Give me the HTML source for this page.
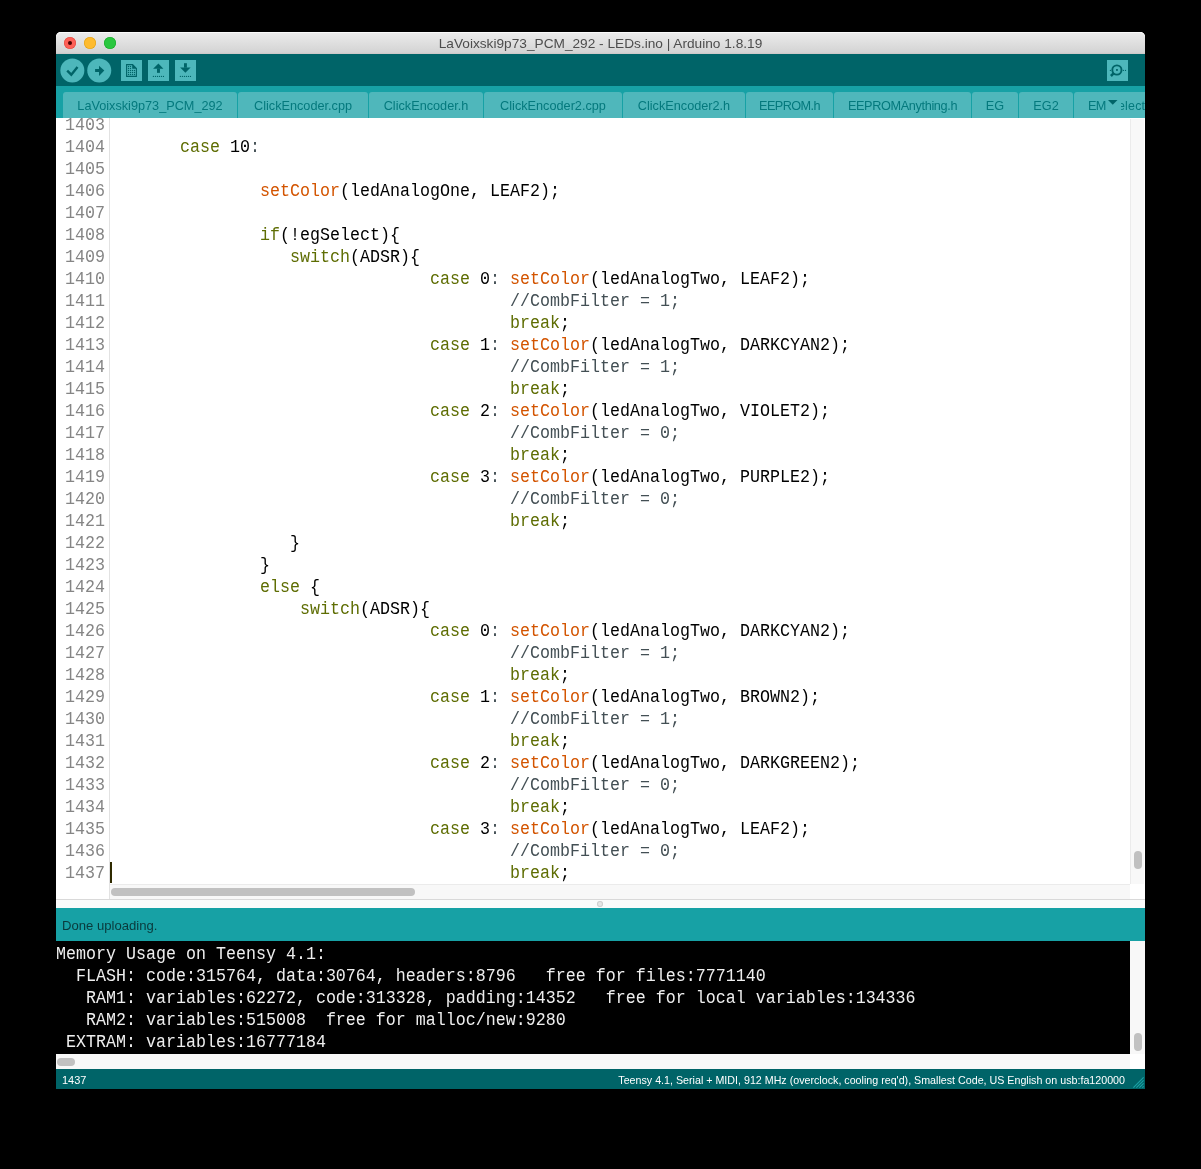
<!DOCTYPE html><html><head><meta charset="utf-8"><style>
*{margin:0;padding:0;box-sizing:border-box}
html,body{width:1201px;height:1169px;background:#000;overflow:hidden}
body{position:relative}
.a{position:absolute}
.mono{will-change:transform;font-family:"Liberation Mono",monospace;font-size:16.667px;line-height:22px;white-space:pre;transform:scaleY(1.07);transform-origin:0 15.5px}
.sans{will-change:transform;font-family:"Liberation Sans",sans-serif;white-space:pre}
.k{color:#5e6d03}.f{color:#d35400}.c{color:#434f54}.o{color:#434f54}.t{color:#000}
.tab{top:92px;height:26px;background:#4fb7bb;border-radius:3px 3px 0 0;overflow:hidden}
.tab span{will-change:transform;position:absolute;top:1px;left:0;right:0;text-align:center;font:12.7px/26px "Liberation Sans",sans-serif;color:#04797d;white-space:nowrap}
</style></head><body>
<div class="a" style="left:56px;top:32px;width:1089px;height:1057px;background:#fff;border-radius:5px 5px 0 0"></div>
<div class="a" style="left:56px;top:32px;width:1089px;height:22px;border-radius:5px 5px 0 0;background:linear-gradient(#ececec,#d4d4d4 92%,#cbc6c6);box-shadow:inset 0 1px 0 #fafafa"></div>
<div class="a sans" style="left:56px;top:33px;width:1089px;height:22px;text-align:center;font-size:13.68px;line-height:22px;color:#4d4d4d">LaVoixski9p73_PCM_292 - LEDs.ino | Arduino 1.8.19</div>
<div class="a" style="left:64px;top:37px;width:12px;height:12px;border-radius:50%;background:#fe6057;box-shadow:inset 0 0 0 0.6px #e24b41"></div>
<div class="a" style="left:84px;top:37px;width:12px;height:12px;border-radius:50%;background:#febb2e;box-shadow:inset 0 0 0 0.6px #e1a116"></div>
<div class="a" style="left:104px;top:37px;width:12px;height:12px;border-radius:50%;background:#2ac73f;box-shadow:inset 0 0 0 0.6px #1aab29"></div>
<div class="a" style="left:68px;top:41px;width:4px;height:4px;border-radius:50%;background:#4d0000"></div>
<div class="a" style="left:56px;top:54px;width:1089px;height:32px;background:#006468"></div>
<div class="a" style="left:56px;top:86px;width:1089px;height:32px;background:#17a1a5"></div>
<div class="a" style="left:0;top:0;width:1145px;height:1169px;overflow:hidden">
<div class="a tab" style="left:63px;width:174px"><span style="letter-spacing:0.00px">LaVoixski9p73_PCM_292</span></div>
<div class="a tab" style="left:238px;width:130px"><span style="letter-spacing:0.00px">ClickEncoder.cpp</span></div>
<div class="a tab" style="left:369px;width:114px"><span style="letter-spacing:0.00px">ClickEncoder.h</span></div>
<div class="a tab" style="left:484px;width:138px"><span style="letter-spacing:0.00px">ClickEncoder2.cpp</span></div>
<div class="a tab" style="left:623px;width:122px"><span style="letter-spacing:0.00px">ClickEncoder2.h</span></div>
<div class="a tab" style="left:746px;width:87px"><span style="letter-spacing:-0.60px">EEPROM.h</span></div>
<div class="a tab" style="left:834px;width:137px"><span style="letter-spacing:-0.36px">EEPROMAnything.h</span></div>
<div class="a tab" style="left:972px;width:46px"><span style="letter-spacing:0.00px">EG</span></div>
<div class="a tab" style="left:1019px;width:54px"><span style="letter-spacing:0.00px">EG2</span></div>
<div class="a tab" style="left:1074px;width:86px"><span style="letter-spacing:0.00px"></span></div>
<div class="a sans" style="left:1088px;top:93px;height:26px;line-height:26px;font-size:12.7px;letter-spacing:-0.6px;color:#04797d">EM</div>
<div class="a" style="left:1121px;top:93px;width:24px;height:25px;overflow:hidden"><div class="a sans" style="left:-3px;top:0;line-height:26px;font-size:12.4px;letter-spacing:0.2px;color:#04797d">elect</div></div>
</div>
<svg class="a" style="left:0;top:0" width="1201" height="1169" viewBox="0 0 1201 1169"><g fill="#4db7bb"><circle cx="72.35" cy="70.45" r="12"/><circle cx="99.25" cy="70.45" r="12"/><rect x="121" y="60" width="21" height="21"/><rect x="148" y="60" width="21" height="21"/><rect x="175" y="60" width="21" height="21"/><rect x="1107" y="60" width="21" height="21"/></g><g fill="#006468" stroke="none"><polyline points="67.2,70.7 71.3,74.7 77.5,67.1" fill="none" stroke="#006468" stroke-width="2.4"/><rect x="95.1" y="69" width="4.4" height="3"/><polygon points="99,65.8 104.3,70.5 99,76"/><path d="M126.6,64.6 H132.6 L136.4,68.4 V76.4 H126.6 Z" fill="none" stroke="#006468" stroke-width="1.1"/><polygon points="132.2,64.1 136.9,68.8 132.2,68.8"/><rect x="127.9" y="65.9" width="1.2" height="1.2"/><rect x="129.9" y="65.9" width="1.2" height="1.2"/><rect x="127.9" y="67.9" width="1.2" height="1.2"/><rect x="129.9" y="67.9" width="1.2" height="1.2"/><rect x="127.9" y="69.9" width="1.2" height="1.2"/><rect x="129.9" y="69.9" width="1.2" height="1.2"/><rect x="131.9" y="69.9" width="1.2" height="1.2"/><rect x="133.9" y="69.9" width="1.2" height="1.2"/><rect x="127.9" y="71.9" width="1.2" height="1.2"/><rect x="129.9" y="71.9" width="1.2" height="1.2"/><rect x="131.9" y="71.9" width="1.2" height="1.2"/><rect x="133.9" y="71.9" width="1.2" height="1.2"/><rect x="127.9" y="73.9" width="1.2" height="1.2"/><rect x="129.9" y="73.9" width="1.2" height="1.2"/><rect x="131.9" y="73.9" width="1.2" height="1.2"/><rect x="133.9" y="73.9" width="1.2" height="1.2"/><polygon points="153.1,68.8 158.42,63.6 163.4,68.8"/><rect x="157" y="68.5" width="2.95" height="4.35"/><rect x="184" y="63.2" width="2.9" height="4.5"/><polygon points="180.1,67.45 190.6,67.45 185.4,72.85"/><circle cx="153.40" cy="76.44" r="0.62"/><circle cx="155.41" cy="76.44" r="0.62"/><circle cx="157.42" cy="76.44" r="0.62"/><circle cx="159.43" cy="76.44" r="0.62"/><circle cx="161.44" cy="76.44" r="0.62"/><circle cx="163.45" cy="76.44" r="0.62"/><circle cx="180.40" cy="76.44" r="0.62"/><circle cx="182.41" cy="76.44" r="0.62"/><circle cx="184.42" cy="76.44" r="0.62"/><circle cx="186.43" cy="76.44" r="0.62"/><circle cx="188.44" cy="76.44" r="0.62"/><circle cx="190.45" cy="76.44" r="0.62"/><circle cx="1116.9" cy="70" r="4.6" fill="none" stroke="#006468" stroke-width="1.9"/><rect x="1116.05" y="69.05" width="1.8" height="1.8"/><line x1="1113.8" y1="73.1" x2="1110.9" y2="76.0" stroke="#006468" stroke-width="2.5"/><circle cx="1110.4" cy="70.4" r="0.62"/><circle cx="1123.4" cy="70.4" r="0.62"/><circle cx="1125.5" cy="70.4" r="0.62"/><polygon points="1108,100 1117.5,100 1112.75,104.8"/></g></svg>
<div class="a" style="left:56px;top:118px;width:1089px;height:781px;background:#fff"></div>
<div class="a" style="left:109px;top:118px;width:1px;height:781px;background:#e2e2e2"></div>
<div class="a" style="left:56px;top:118px;width:1074px;height:766px;overflow:hidden">
<div class="a mono" style="left:5px;top:-3.50px;width:44px;text-align:right;color:#858585">1403</div>
<div class="a mono" style="left:5px;top:18.50px;width:44px;text-align:right;color:#858585">1404</div>
<div class="a mono k" style="left:124.00px;top:18.50px">case</div>
<div class="a mono t" style="left:174.00px;top:18.50px">10</div>
<div class="a mono o" style="left:194.00px;top:18.50px">:</div>
<div class="a mono" style="left:5px;top:40.50px;width:44px;text-align:right;color:#858585">1405</div>
<div class="a mono" style="left:5px;top:62.50px;width:44px;text-align:right;color:#858585">1406</div>
<div class="a mono f" style="left:204.00px;top:62.50px">setColor</div>
<div class="a mono t" style="left:284.00px;top:62.50px">(ledAnalogOne, LEAF2);</div>
<div class="a mono" style="left:5px;top:84.50px;width:44px;text-align:right;color:#858585">1407</div>
<div class="a mono" style="left:5px;top:106.50px;width:44px;text-align:right;color:#858585">1408</div>
<div class="a mono k" style="left:204.00px;top:106.50px">if</div>
<div class="a mono t" style="left:224.00px;top:106.50px">(!egSelect){</div>
<div class="a mono" style="left:5px;top:128.50px;width:44px;text-align:right;color:#858585">1409</div>
<div class="a mono k" style="left:234.00px;top:128.50px">switch</div>
<div class="a mono t" style="left:294.00px;top:128.50px">(ADSR){</div>
<div class="a mono" style="left:5px;top:150.50px;width:44px;text-align:right;color:#858585">1410</div>
<div class="a mono k" style="left:374.00px;top:150.50px">case</div>
<div class="a mono t" style="left:424.00px;top:150.50px">0</div>
<div class="a mono o" style="left:434.00px;top:150.50px">:</div>
<div class="a mono f" style="left:454.00px;top:150.50px">setColor</div>
<div class="a mono t" style="left:534.00px;top:150.50px">(ledAnalogTwo, LEAF2);</div>
<div class="a mono" style="left:5px;top:172.50px;width:44px;text-align:right;color:#858585">1411</div>
<div class="a mono c" style="left:454.00px;top:172.50px">//CombFilter = 1;</div>
<div class="a mono" style="left:5px;top:194.50px;width:44px;text-align:right;color:#858585">1412</div>
<div class="a mono k" style="left:454.00px;top:194.50px">break</div>
<div class="a mono t" style="left:504.00px;top:194.50px">;</div>
<div class="a mono" style="left:5px;top:216.50px;width:44px;text-align:right;color:#858585">1413</div>
<div class="a mono k" style="left:374.00px;top:216.50px">case</div>
<div class="a mono t" style="left:424.00px;top:216.50px">1</div>
<div class="a mono o" style="left:434.00px;top:216.50px">:</div>
<div class="a mono f" style="left:454.00px;top:216.50px">setColor</div>
<div class="a mono t" style="left:534.00px;top:216.50px">(ledAnalogTwo, DARKCYAN2);</div>
<div class="a mono" style="left:5px;top:238.50px;width:44px;text-align:right;color:#858585">1414</div>
<div class="a mono c" style="left:454.00px;top:238.50px">//CombFilter = 1;</div>
<div class="a mono" style="left:5px;top:260.50px;width:44px;text-align:right;color:#858585">1415</div>
<div class="a mono k" style="left:454.00px;top:260.50px">break</div>
<div class="a mono t" style="left:504.00px;top:260.50px">;</div>
<div class="a mono" style="left:5px;top:282.50px;width:44px;text-align:right;color:#858585">1416</div>
<div class="a mono k" style="left:374.00px;top:282.50px">case</div>
<div class="a mono t" style="left:424.00px;top:282.50px">2</div>
<div class="a mono o" style="left:434.00px;top:282.50px">:</div>
<div class="a mono f" style="left:454.00px;top:282.50px">setColor</div>
<div class="a mono t" style="left:534.00px;top:282.50px">(ledAnalogTwo, VIOLET2);</div>
<div class="a mono" style="left:5px;top:304.50px;width:44px;text-align:right;color:#858585">1417</div>
<div class="a mono c" style="left:454.00px;top:304.50px">//CombFilter = 0;</div>
<div class="a mono" style="left:5px;top:326.50px;width:44px;text-align:right;color:#858585">1418</div>
<div class="a mono k" style="left:454.00px;top:326.50px">break</div>
<div class="a mono t" style="left:504.00px;top:326.50px">;</div>
<div class="a mono" style="left:5px;top:348.50px;width:44px;text-align:right;color:#858585">1419</div>
<div class="a mono k" style="left:374.00px;top:348.50px">case</div>
<div class="a mono t" style="left:424.00px;top:348.50px">3</div>
<div class="a mono o" style="left:434.00px;top:348.50px">:</div>
<div class="a mono f" style="left:454.00px;top:348.50px">setColor</div>
<div class="a mono t" style="left:534.00px;top:348.50px">(ledAnalogTwo, PURPLE2);</div>
<div class="a mono" style="left:5px;top:370.50px;width:44px;text-align:right;color:#858585">1420</div>
<div class="a mono c" style="left:454.00px;top:370.50px">//CombFilter = 0;</div>
<div class="a mono" style="left:5px;top:392.50px;width:44px;text-align:right;color:#858585">1421</div>
<div class="a mono k" style="left:454.00px;top:392.50px">break</div>
<div class="a mono t" style="left:504.00px;top:392.50px">;</div>
<div class="a mono" style="left:5px;top:414.50px;width:44px;text-align:right;color:#858585">1422</div>
<div class="a mono t" style="left:234.00px;top:414.50px">}</div>
<div class="a mono" style="left:5px;top:436.50px;width:44px;text-align:right;color:#858585">1423</div>
<div class="a mono t" style="left:204.00px;top:436.50px">}</div>
<div class="a mono" style="left:5px;top:458.50px;width:44px;text-align:right;color:#858585">1424</div>
<div class="a mono k" style="left:204.00px;top:458.50px">else</div>
<div class="a mono t" style="left:254.00px;top:458.50px">{</div>
<div class="a mono" style="left:5px;top:480.50px;width:44px;text-align:right;color:#858585">1425</div>
<div class="a mono k" style="left:244.00px;top:480.50px">switch</div>
<div class="a mono t" style="left:304.00px;top:480.50px">(ADSR){</div>
<div class="a mono" style="left:5px;top:502.50px;width:44px;text-align:right;color:#858585">1426</div>
<div class="a mono k" style="left:374.00px;top:502.50px">case</div>
<div class="a mono t" style="left:424.00px;top:502.50px">0</div>
<div class="a mono o" style="left:434.00px;top:502.50px">:</div>
<div class="a mono f" style="left:454.00px;top:502.50px">setColor</div>
<div class="a mono t" style="left:534.00px;top:502.50px">(ledAnalogTwo, DARKCYAN2);</div>
<div class="a mono" style="left:5px;top:524.50px;width:44px;text-align:right;color:#858585">1427</div>
<div class="a mono c" style="left:454.00px;top:524.50px">//CombFilter = 1;</div>
<div class="a mono" style="left:5px;top:546.50px;width:44px;text-align:right;color:#858585">1428</div>
<div class="a mono k" style="left:454.00px;top:546.50px">break</div>
<div class="a mono t" style="left:504.00px;top:546.50px">;</div>
<div class="a mono" style="left:5px;top:568.50px;width:44px;text-align:right;color:#858585">1429</div>
<div class="a mono k" style="left:374.00px;top:568.50px">case</div>
<div class="a mono t" style="left:424.00px;top:568.50px">1</div>
<div class="a mono o" style="left:434.00px;top:568.50px">:</div>
<div class="a mono f" style="left:454.00px;top:568.50px">setColor</div>
<div class="a mono t" style="left:534.00px;top:568.50px">(ledAnalogTwo, BROWN2);</div>
<div class="a mono" style="left:5px;top:590.50px;width:44px;text-align:right;color:#858585">1430</div>
<div class="a mono c" style="left:454.00px;top:590.50px">//CombFilter = 1;</div>
<div class="a mono" style="left:5px;top:612.50px;width:44px;text-align:right;color:#858585">1431</div>
<div class="a mono k" style="left:454.00px;top:612.50px">break</div>
<div class="a mono t" style="left:504.00px;top:612.50px">;</div>
<div class="a mono" style="left:5px;top:634.50px;width:44px;text-align:right;color:#858585">1432</div>
<div class="a mono k" style="left:374.00px;top:634.50px">case</div>
<div class="a mono t" style="left:424.00px;top:634.50px">2</div>
<div class="a mono o" style="left:434.00px;top:634.50px">:</div>
<div class="a mono f" style="left:454.00px;top:634.50px">setColor</div>
<div class="a mono t" style="left:534.00px;top:634.50px">(ledAnalogTwo, DARKGREEN2);</div>
<div class="a mono" style="left:5px;top:656.50px;width:44px;text-align:right;color:#858585">1433</div>
<div class="a mono c" style="left:454.00px;top:656.50px">//CombFilter = 0;</div>
<div class="a mono" style="left:5px;top:678.50px;width:44px;text-align:right;color:#858585">1434</div>
<div class="a mono k" style="left:454.00px;top:678.50px">break</div>
<div class="a mono t" style="left:504.00px;top:678.50px">;</div>
<div class="a mono" style="left:5px;top:700.50px;width:44px;text-align:right;color:#858585">1435</div>
<div class="a mono k" style="left:374.00px;top:700.50px">case</div>
<div class="a mono t" style="left:424.00px;top:700.50px">3</div>
<div class="a mono o" style="left:434.00px;top:700.50px">:</div>
<div class="a mono f" style="left:454.00px;top:700.50px">setColor</div>
<div class="a mono t" style="left:534.00px;top:700.50px">(ledAnalogTwo, LEAF2);</div>
<div class="a mono" style="left:5px;top:722.50px;width:44px;text-align:right;color:#858585">1436</div>
<div class="a mono c" style="left:454.00px;top:722.50px">//CombFilter = 0;</div>
<div class="a mono" style="left:5px;top:744.50px;width:44px;text-align:right;color:#858585">1437</div>
<div class="a mono k" style="left:454.00px;top:744.50px">break</div>
<div class="a mono t" style="left:504.00px;top:744.50px">;</div>
</div>
<div class="a" style="left:110px;top:862px;width:2px;height:21px;background:#2f2a00"></div>
<div class="a" style="left:1130px;top:119px;width:14px;height:765px;background:#f8f8f8;border-left:1px solid #ebebeb"></div>
<div class="a" style="left:1134px;top:851px;width:8px;height:18px;border-radius:4px;background:#c1c1c1"></div>
<div class="a" style="left:110px;top:884px;width:1020px;height:15px;background:#f8f8f8;border-top:1px solid #ebebeb"></div>
<div class="a" style="left:111px;top:888px;width:304px;height:8px;border-radius:4px;background:#c1c1c1"></div>
<div class="a" style="left:56px;top:899px;width:1089px;height:1px;background:#d9d9d9"></div>
<div class="a" style="left:56px;top:900px;width:1089px;height:8px;background:#fbfbfb"></div>
<div class="a" style="left:597px;top:901px;width:6px;height:6px;border-radius:50%;background:#e6e6e6;box-shadow:inset 0 0 0 1px #cfcfcf"></div>
<div class="a" style="left:56px;top:908px;width:1089px;height:33px;background:#17a1a5"></div>
<div class="a sans" style="left:62px;top:909px;height:33px;line-height:33px;font-size:13.1px;color:#0a3a3c">Done uploading.</div>
<div class="a" style="left:56px;top:941px;width:1074px;height:113px;background:#000;overflow:hidden">
<div class="a mono" style="left:0;top:2.50px;color:#eeeeee">Memory Usage on Teensy 4.1:</div>
<div class="a mono" style="left:0;top:24.50px;color:#eeeeee">  FLASH: code:315764, data:30764, headers:8796   free for files:7771140</div>
<div class="a mono" style="left:0;top:46.50px;color:#eeeeee">   RAM1: variables:62272, code:313328, padding:14352   free for local variables:134336</div>
<div class="a mono" style="left:0;top:68.50px;color:#eeeeee">   RAM2: variables:515008  free for malloc/new:9280</div>
<div class="a mono" style="left:0;top:90.50px;color:#eeeeee"> EXTRAM: variables:16777184</div>
</div>
<div class="a" style="left:1130px;top:941px;width:15px;height:113px;background:#f8f8f8"></div>
<div class="a" style="left:1134px;top:1033px;width:8px;height:18px;border-radius:4px;background:#c1c1c1"></div>
<div class="a" style="left:56px;top:1054px;width:1074px;height:15px;background:#f8f8f8"></div>
<div class="a" style="left:57px;top:1058px;width:18px;height:8px;border-radius:4px;background:#c1c1c1"></div>
<div class="a" style="left:1130px;top:1054px;width:15px;height:15px;background:#fff"></div>
<div class="a" style="left:56px;top:1069px;width:1089px;height:20px;background:#006468"></div>
<div class="a sans" style="left:62px;top:1070px;height:20px;line-height:20px;font-size:11px;color:#fff">1437</div>
<div class="a sans" style="left:600px;width:525px;top:1070px;height:20px;line-height:20px;font-size:10.7px;color:#fff;text-align:right">Teensy 4.1, Serial + MIDI, 912 MHz (overclock, cooling req'd), Smallest Code, US English on usb:fa120000</div>
<svg class="a" style="left:1125px;top:1069px" width="20" height="20" viewBox="1125 1069 20 20"><g stroke="#1ba3a7" stroke-width="1.1"><line x1="1133.4" y1="1087.6" x2="1143.6" y2="1077.4"/><line x1="1136.4" y1="1087.6" x2="1143.6" y2="1080.4"/><line x1="1139.4" y1="1087.6" x2="1143.6" y2="1083.4"/><line x1="1142.4" y1="1087.6" x2="1143.6" y2="1086.4"/></g></svg>
</body></html>
